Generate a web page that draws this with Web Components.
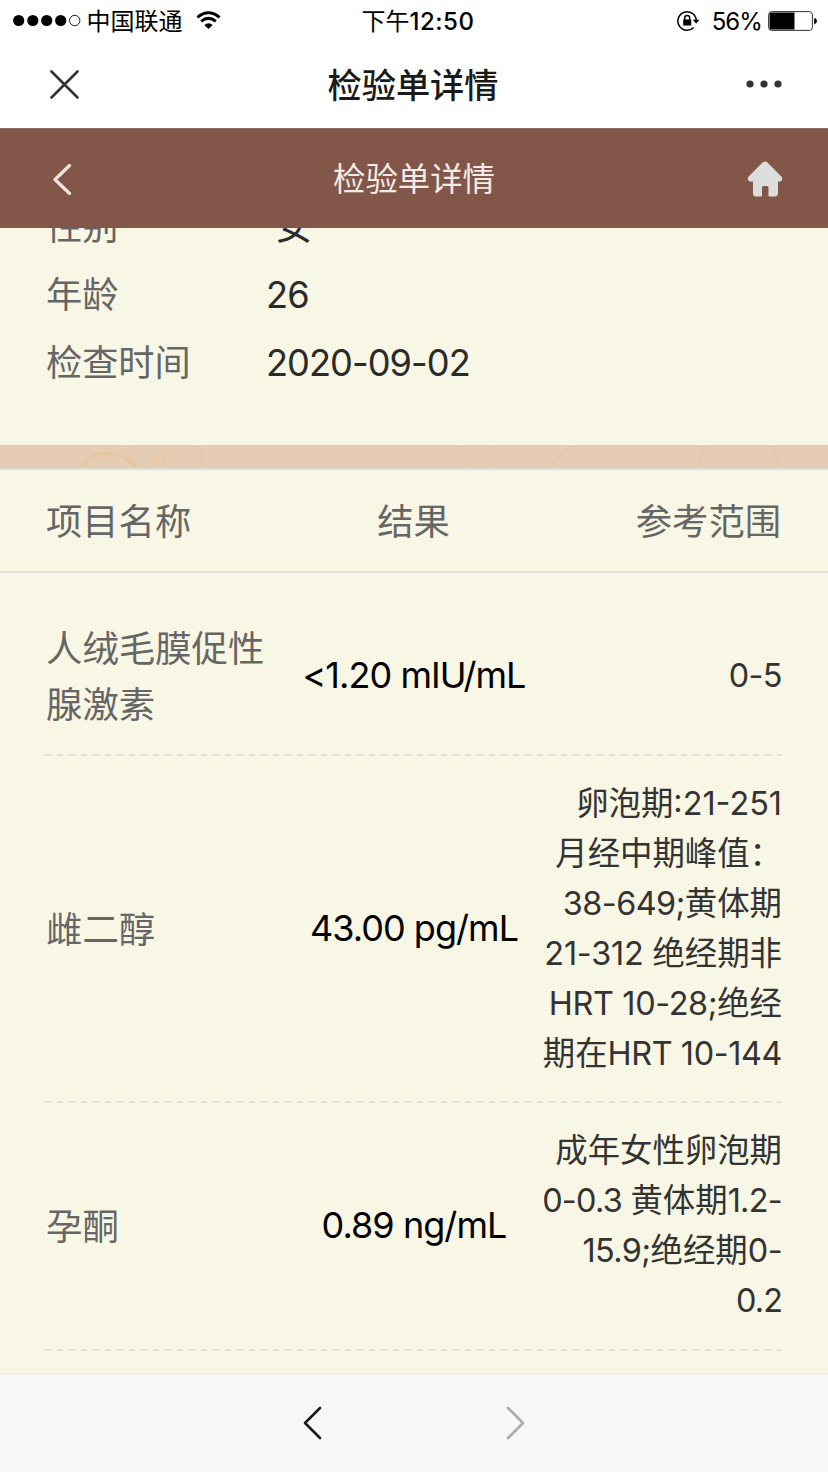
<!DOCTYPE html>
<html lang="zh-CN">
<head>
<meta charset="utf-8">
<title>检验单详情</title>
<style>
  body { margin: 0; font-family: Inter, "Noto Sans CJK SC", sans-serif; }
</style>
</head>
<body>
<lab-app></lab-app>
<script>
const define = (name, html) => customElements.define(name, class extends HTMLElement {
  constructor() {
    super();
    const t = document.createElement('template');
    t.innerHTML = html;
    this.attachShadow({ mode: 'open' }).append(t.content.cloneNode(true));
  }
});

define('status-bar', `
<style>
  :host { display: grid; grid-template-columns: 1fr auto 1fr; align-items: center; height: 42px; background: #fff; color: #000; font-size: 24px; line-height: 42px; white-space: nowrap; }
  .l, .r { display: flex; align-items: center; }
  .l { padding-left: 12px; }
  .r { justify-content: flex-end; padding-right: 11px; }
  svg { display: block; flex: none; }
  .time { font-weight: 500; font-size: 24px; letter-spacing: .5px; transform: translate(4px, 1px); }
  .time i { font-style: normal; font-weight: 400; letter-spacing: 0; }
</style>
<div class="l">
  <svg width="70" height="14" viewBox="0 0 70 14"><g><circle cx="6.7" cy="6.5" r="5.6"/><circle cx="20.8" cy="6.5" r="5.6"/><circle cx="34.7" cy="6.5" r="5.6"/><circle cx="48.7" cy="6.5" r="5.6"/></g><circle cx="62.7" cy="6.5" r="5.2" fill="none" stroke="#000" stroke-width=".9"/></svg>
  <span style="margin-left:4.500px;transform:translateY(1px)">中国联通</span>
  <svg style="margin-left:13px;transform:translateY(-1px)" width="26" height="20" viewBox="0 0 26 20" fill="none" stroke="#000" stroke-width="2.9"><path d="M1.4 7.3Q12.500-2 23.600 7.300"/><path d="M5.200 11.300Q12.500 5.200 19.800 11.300"/><path d="M8.300 15Q12.500 11.400 16.700 15L12.500 19Z" fill="#000" stroke="none"/></svg>
</div>
<div class="time"><i>下午</i>12:50</div>
<div class="r">
  <svg width="24" height="22" viewBox="0 0 24 22" fill="none" stroke="#000" stroke-width="1.5"><path d="M16.700 17.500A9.200 9.200 0 1 1 19.300 10.500"/><path d="M15.700 9.800h6.800l-3.400 3.800z" fill="#000" stroke="none"/><rect x="6.200" y="9.500" width="8" height="6" fill="#000" stroke="none"/><path d="M7.700 10V8a2.500 2.500 0 0 1 5 0V10"/></svg>
  <span style="margin:0 6px 0 11px;letter-spacing:-.9px;transform:translateY(1px)">56%</span>
  <svg width="49" height="20" viewBox="0 0 49 20"><rect x=".6" y=".6" width="43.800" height="18.800" rx="3" fill="none" stroke="#333" stroke-width="1"/><path d="M3 1.500H26.500V18.500H3Q1.500 18.500 1.500 17V3Q1.500 1.500 3 1.500Z"/><path d="M46.200 6.800Q49 7.500 49 10T46.200 13.200Z"/></svg>
</div>`);

define('wx-bar', `
<style>
  :host { display: grid; grid-template-columns: 1fr auto 1fr; align-items: center; height: 86px; padding: 0 46px 2px 50px; background: #fff; color: #1a1a1a; box-sizing: border-box; }
  h1 { margin: 0; font-size: 34.200px; font-weight: 500; line-height: 50px; transform: translate(-3px, 2px); }
  svg { display: block; }
  .r { justify-self: end; }
</style>
<svg width="29" height="29" viewBox="0 0 29 29" stroke="#333" stroke-width="2.600" stroke-linecap="round"><path d="M1.500 1.500 27.500 27.500M27.500 1.500 1.500 27.500"/></svg>
<h1><slot></slot></h1>
<svg class="r" width="36" height="8" viewBox="0 0 36 8" fill="#333"><circle cx="4" cy="4" r="3.600"/><circle cx="18" cy="4" r="3.600"/><circle cx="32" cy="4" r="3.600"/></svg>`);

define('page-bar', `
<style>
  :host { display: grid; grid-template-columns: 1fr auto 1fr; align-items: center; height: 100px; padding: 0 45px 0 53px; background: #82574a; color: #f5eae6; box-sizing: border-box; position: relative; z-index: 1; border-top: 1px solid #876c66; }
  h2 { margin: 0; font-size: 32.400px; font-weight: 400; line-height: 50px; transform: translate(-4px, 1px); }
  svg { display: block; }
  .r { justify-self: end; }
</style>
<svg width="20" height="32" viewBox="0 0 20 32" fill="none" stroke="#f3e3df" stroke-width="3.200" stroke-linecap="round" stroke-linejoin="round"><path d="M16.500 2.500 2 16.500 16.500 30.500"/></svg>
<h2><slot></slot></h2>
<svg class="r" width="36" height="36" viewBox="0 0 36 36" fill="#ddd"><path d="M15.800 1.300Q18 -.5 20.200 1.300L34.600 15.800Q36.500 19.500 33 20.600H31V32Q31 35.500 27.500 35.500H22.200Q21.500 35.500 21.500 34.500V26.500Q21.500 25 20 25H16.500Q15 25 15 26.500V34.500Q15 35.500 14 35.500H9Q6 35.500 6 32V20.600H3Q-.5 19.500 1.400 15.800Z"/></svg>`);

define('info-row', `
<style>
  :host { display: grid; grid-template-columns: 220px 1fr; height: 67.500px; align-items: center; font-size: 36.200px; line-height: 50px; color: #666; }
  .v { color: #2b2b2b; }
</style>
<span class="l"><slot name="label"></slot></span><span class="v"><slot></slot></span>`);

define('pattern-band', `
<style>:host { display: block; height: 23px; background: #e6ccb3; } svg { display: block; }</style>
<svg width="828" height="23" viewBox="0 0 828 23" fill="none" stroke="#e6c8a8" stroke-width="1.500">
  <path d="M82 22Q90 8 107 8T136 22" stroke="#e6c5a0" stroke-width="3"/><path d="M86 15Q110 4 132 14M128 1Q134 10 134 22M199 1Q203 10 202 22"/>
  <path d="M156 12Q158 17 160 22M169 7Q163 14 164 22" stroke="#edc39f"/>
  <path d="M462 1Q466 12 469 22M493 1V22M571 1Q557 12 552 22M709 2Q702 9 697 22M703 1L698 21M771 1Q778 12 778 22" stroke="#e3c7a8"/>
</svg>`);

define('table-head', `
<style>
  :host { display: grid; grid-template-columns: 1fr 1fr 1fr; align-items: center; height: 105px; padding: 2px 47px 0 46px; box-sizing: border-box; border: solid #dedede; border-width: 2px 0; font-size: 36.300px; color: #666; line-height: 50px; }
  .c { text-align: center; } .r { text-align: right; }
</style>
<span><slot name="a"></slot></span><span class="c"><slot name="b"></slot></span><span class="r"><slot name="c"></slot></span>`);

define('result-row', `
<style>
  :host { display: grid; grid-template-columns: 1fr auto 1fr; align-items: center; margin: 0 46px 0 45px; padding: 23px 0 24px 1px; position: relative; white-space: nowrap;
    background: repeating-linear-gradient(90deg, #dfdfdb 0 6px, transparent 6px 12px) left bottom / 100% 2px no-repeat; }
  .n { font-size: 36.400px; line-height: 56px; color: #666; transform: translateY(1px); }
  .v { font-size: 36px; line-height: 50px; color: #000; text-align: center; letter-spacing: -.95px; transform: translateY(-1px); }
  .r { font-size: 32.400px; line-height: 50px; color: #333; text-align: right; }
</style>
<div class="n"><slot name="name"></slot></div><div class="v"><slot name="value"></slot></div><div class="r"><slot name="range"></slot></div>`);

define('nav-footer', `
<style>
  :host { display: flex; justify-content: center; align-items: center; gap: 184px; height: 99px; box-sizing: border-box; background: #f7f7f7; border-top: 1px solid #e8e8dc; position: relative; z-index: 1; }
  svg { display: block; fill: none; stroke-width: 2.600; stroke-linecap: round; stroke-linejoin: round; }
</style>
<svg width="19" height="34" viewBox="0 0 19 34" stroke="#1a1a1a"><path d="M17 2 2 17 17 32"/></svg>
<svg width="19" height="34" viewBox="0 0 19 34" stroke="#aaa"><path d="M2 2 17 17 2 32"/></svg>`);

define('lab-app', `
<style>
  :host { display: flex; flex-direction: column; width: 828px; height: 1472px; overflow: hidden; background: #f8f6e4; }
  main { flex: 1; min-height: 0; overflow: hidden; }
  .info { display: flow-root; height: 217px; padding-left: 46px; }
  .info info-row:first-child { margin: -35px 0 1px; }
  .rows { padding-top: 24px; }
  b { font-weight: 400; letter-spacing: -.55px; }
</style>
<status-bar></status-bar>
<wx-bar>检验单详情</wx-bar>
<page-bar>检验单详情</page-bar>
<main>
  <div class="info">
    <info-row><span slot="label">性别</span><span style="padding-left:10px">女</span></info-row>
    <info-row><span slot="label">年龄</span><span style="letter-spacing:-.9px">26</span></info-row>
    <info-row><span slot="label">检查时间</span><span style="letter-spacing:-.95px">2020-09-02</span></info-row>
  </div>
  <pattern-band></pattern-band>
  <table-head><span slot="a">项目名称</span><span slot="b">结果</span><span slot="c">参考范围</span></table-head>
  <div class="rows">
    <result-row><span slot="name">人绒毛膜促性<br>腺激素</span><span slot="value">&lt;1.20 mIU/mL</span><span slot="range"><b>0-5</b></span></result-row>
    <result-row><span slot="name">雌二醇</span><span slot="value">43.00 pg/mL</span><span slot="range">卵泡期<b style="letter-spacing:0">:21-251</b><br>月经中期峰值：<br><b>38-649;</b>黄体期<br><b style="letter-spacing:-.2px">21-312 </b>绝经期非<br><b style="letter-spacing:-.35px">HRT 10-28;</b>绝经<br>期在<b style="letter-spacing:-.4px">HRT 10-144</b></span></result-row>
    <result-row style="padding-bottom:25px"><span slot="name">孕酮</span><span slot="value">0.89 ng/mL</span><span slot="range">成年女性卵泡期<br><b style="letter-spacing:-.7px">0-0.3 </b>黄体期<b style="letter-spacing:-.7px">1.2-</b><br><b>15.9;</b>绝经期<b>0-</b><br><b style="letter-spacing:-.9px">0.2</b></span></result-row>
  </div>
</main>
<nav-footer></nav-footer>`);
</script>
</body>
</html>
